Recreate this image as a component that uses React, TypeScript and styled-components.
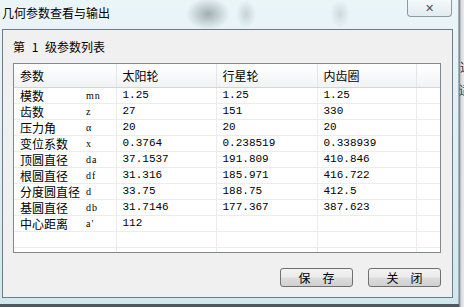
import React from 'react';
import styled, { createGlobalStyle } from 'styled-components';

const GlobalStyle = createGlobalStyle`
  html, body {
    margin: 0;
    padding: 0;
    background: #5d6670;
  }
  #root {
    width: 464px;
    height: 307px;
    overflow: hidden;
  }
`;

const Desktop = styled.div`
  width: 464px;
  height: 307px;
  display: flex;
  background: #4f5860;
  font-family: "Noto Sans CJK SC", "Liberation Sans", sans-serif;
`;

const Window = styled.div`
  width: 459px;
  height: 304px;
  display: flex;
  flex-direction: column;
  background:
    radial-gradient(ellipse 22px 16px at 208px 14px, rgba(70, 90, 100, 0.45), transparent),
    radial-gradient(ellipse 10px 14px at 246px 14px, rgba(90, 110, 120, 0.25), transparent),
    radial-gradient(ellipse 10px 14px at 340px 14px, rgba(90, 110, 120, 0.2), transparent),
    linear-gradient(180deg, #eaf5f8 0%, #dcedf2 60%, #cfe8ee 100%);
  border-right: 1px solid #9bb3bf;
  box-sizing: border-box;
`;

const TitleBar = styled.div`
  height: 29px;
  display: flex;
  justify-content: space-between;
  align-items: flex-start;
  padding-right: 6px;
`;

const TitleText = styled.div`
  font-size: 12px;
  line-height: 14px;
  color: #000;
  padding: 6px 0 0 2px;
  text-shadow: 0 0 6px rgba(255, 255, 255, 0.9);
`;

const CloseButton = styled.div`
  width: 45px;
  height: 17px;
  box-sizing: border-box;
  border: 1px solid #8a99a6;
  border-top: none;
  border-radius: 0 0 4px 4px;
  background: linear-gradient(180deg, #f4f8fa 0%, #e2ecf1 100%);
  display: flex;
  align-items: center;
  justify-content: center;
  color: #4a4f55;
  font-family: "DejaVu Sans", sans-serif;
  font-size: 11px;
  font-weight: bold;
  line-height: 1;
`;

const Client = styled.div`
  flex: 1;
  margin: 0 5px 6px 2px;
  background: #f0f0f0;
  border: 1px solid #6f7b86;
  display: flex;
  flex-direction: column;
  padding: 10px 11px 0 10px;
`;

const GroupLabel = styled.div`
  font-size: 12px;
  line-height: 14px;
  word-spacing: 4px;
  color: #000;
  height: 23px;
`;

const Grid = styled.div`
  height: 190px;
  box-sizing: border-box;
  border: 1px solid #828790;
  background: #fff;
  overflow: hidden;
`;

const Table = styled.table`
  border-collapse: collapse;
  table-layout: fixed;
  width: 100%;
`;

const HeadCell = styled.th<{ w: number }>`
  width: ${(p) => p.w}px;
  height: 23px;
  padding: 0 0 0 6px;
  text-align: left;
  font-weight: normal;
  font-size: 12px;
  color: #000;
  background: linear-gradient(180deg, #ffffff 0%, #f7f8fa 55%, #f1f2f4 100%);
  border-right: 1px solid #e3e5e8;
  border-bottom: 1px solid #d5d5d5;
  box-sizing: border-box;
`;

const Cell = styled.td<{ mono?: boolean }>`
  height: 16px;
  padding: 0 0 0 6px;
  font-size: ${(p) => (p.mono ? '11px' : '12px')};
  font-family: ${(p) =>
    p.mono ? '"Liberation Mono", "DejaVu Sans Mono", monospace' : '"Noto Sans CJK SC", sans-serif'};
  line-height: 15px;
  color: #000;
  border-right: 1px solid #ececec;
  border-bottom: 1px solid #ececec;
  white-space: nowrap;
  overflow: hidden;
  box-sizing: border-box;
`;

const NameCell = styled.div`
  display: flex;
  align-items: center;
`;

const Name = styled.span`
  width: 66px;
  font-size: 12px;
`;

const Symbol = styled.span`
  font-family: "Liberation Serif", "DejaVu Serif", serif;
  font-size: 10px;
  letter-spacing: 1px;
`;

const Footer = styled.div`
  flex: 1;
  display: flex;
  justify-content: flex-end;
  align-items: flex-start;
  gap: 15px;
  padding-top: 15px;
`;

const Button = styled.button`
  width: 73px;
  height: 19px;
  padding: 0;
  box-sizing: border-box;
  border: 1px solid #707070;
  border-radius: 3px;
  background: linear-gradient(180deg, #f2f2f2 0%, #ebebeb 48%, #dddddd 52%, #cfcfcf 100%);
  font-family: "Noto Sans CJK SC", sans-serif;
  font-size: 12px;
  line-height: 16px;
  letter-spacing: 12px;
  text-indent: 12px;
  color: #000;
`;

const SideStrip = styled.div`
  width: 5px;
  height: 307px;
  background: linear-gradient(90deg, #6a737b 0px, #d6d9dc 2px, #e9ebec 100%);
  overflow: hidden;
  font-size: 12px;
  line-height: 23px;
  padding-top: 55px;
  box-sizing: border-box;
  color: #333;
  text-indent: 1px;
`;

const columns = [
  { title: '参数', w: 102 },
  { title: '太阳轮', w: 100 },
  { title: '行星轮', w: 101 },
  { title: '内齿圈', w: 99 },
  { title: '', w: 24 },
];

const rows: [string, string, string, string, string][] = [
  ['模数', 'mn', '1.25', '1.25', '1.25'],
  ['齿数', 'z', '27', '151', '330'],
  ['压力角', 'α', '20', '20', '20'],
  ['变位系数', 'x', '0.3764', '0.238519', '0.338939'],
  ['顶圆直径', 'da', '37.1537', '191.809', '410.846'],
  ['根圆直径', 'df', '31.316', '185.971', '416.722'],
  ['分度圆直径', 'd', '33.75', '188.75', '412.5'],
  ['基圆直径', 'db', '31.7146', '177.367', '387.623'],
  ['中心距离', "a'", '112', '', ''],
  ['', '', '', '', ''],
  ['', '', '', '', ''],
];

const App: React.FC = () => {
  return (
    <>
      <GlobalStyle />
      <Desktop>
        <Window>
          <TitleBar>
            <TitleText>几何参数查看与输出</TitleText>
            <CloseButton>✕</CloseButton>
          </TitleBar>
          <Client>
            <GroupLabel>第 1 级参数列表</GroupLabel>
            <Grid>
              <Table>
                <thead>
                  <tr>
                    {columns.map((c, i) => (
                      <HeadCell key={i} w={c.w}>
                        {c.title}
                      </HeadCell>
                    ))}
                  </tr>
                </thead>
                <tbody>
                  {rows.map((r, i) => (
                    <tr key={i}>
                      <Cell>
                        <NameCell>
                          <Name>{r[0]}</Name>
                          <Symbol>{r[1]}</Symbol>
                        </NameCell>
                      </Cell>
                      <Cell mono>{r[2]}</Cell>
                      <Cell mono>{r[3]}</Cell>
                      <Cell mono>{r[4]}</Cell>
                      <Cell />
                    </tr>
                  ))}
                </tbody>
              </Table>
            </Grid>
            <Footer>
              <Button>保存</Button>
              <Button>关闭</Button>
            </Footer>
          </Client>
        </Window>
        <SideStrip>
          迏
          <br />
          适
        </SideStrip>
      </Desktop>
    </>
  );
};

export default App;
